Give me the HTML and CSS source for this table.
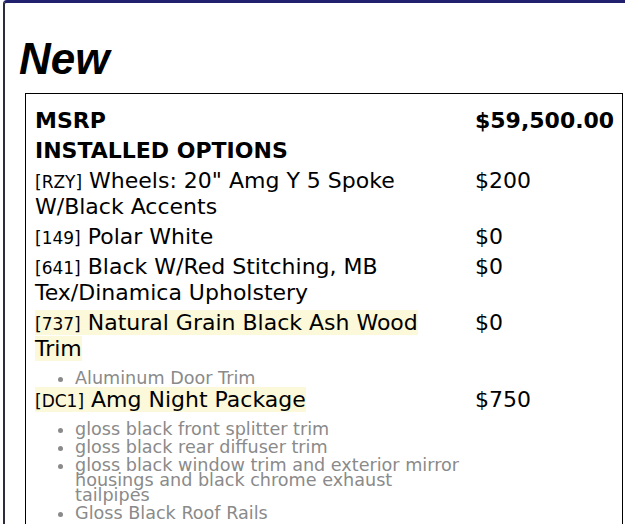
FILE: index.html
```html
<!DOCTYPE html>
<html>
<head>
<meta charset="utf-8">
<link rel="stylesheet" href="styles.css">
</head>
<body>
<div class="page">
  <h1 class="title">New</h1>
  <div class="box">
    <div class="grid">
      <div class="label strong">MSRP</div>
      <div class="price strong">$59,500.00</div>

      <div class="label strong">INSTALLED OPTIONS</div>
      <div class="price"></div>

      <div class="label"><span class="code">[RZY]</span> Wheels: 20" Amg Y 5 Spoke W/Black Accents</div>
      <div class="price">$200</div>

      <div class="label"><span class="code">[149]</span> Polar White</div>
      <div class="price">$0</div>

      <div class="label"><span class="code">[641]</span> Black W/Red Stitching, MB Tex/Dinamica Upholstery</div>
      <div class="price">$0</div>

      <div class="label">
        <span class="hl"><span class="code">[737]</span> Natural Grain Black Ash Wood Trim</span>
        <ul class="sub">
          <li>Aluminum Door Trim</li>
        </ul>
      </div>
      <div class="price">$0</div>

      <div class="label">
        <span class="hl"><span class="code">[DC1]</span> Amg Night Package</span>
        <ul class="sub">
          <li>gloss black front splitter trim</li>
          <li>gloss black rear diffuser trim</li>
          <li>gloss black window trim and exterior mirror housings and black chrome exhaust tailpipes</li>
          <li>Gloss Black Roof Rails</li>
        </ul>
      </div>
      <div class="price">$750</div>
    </div>
  </div>
</div>
</body>
</html>
```

FILE: styles.css
```css
html, body {
  margin: 0;
  padding: 0;
  background: #ffffff;
  overflow: hidden;
}

.page {
  margin-left: 3px;
  width: 700px;
  min-height: 600px;
  border-top: 3px solid #20206e;
  border-left: 2px solid #2c2c3c;
  border-top-left-radius: 4px;
  background: #ffffff;
}

.title {
  margin: 33px 0 11px 14px;
  font-family: "Liberation Sans", Arial, sans-serif;
  font-style: italic;
  font-weight: bold;
  font-size: 44px;
  line-height: 46px;
  color: #000;
}

.box {
  margin-left: 20px;
  width: 587px;
  border: 1px solid #000;
  padding: 14px 0 20px 9px;
  font-family: "DejaVu Sans", sans-serif;
  font-size: 22px;
  line-height: 26px;
  color: #000;
}

.grid {
  display: grid;
  grid-template-columns: 432px auto;
  column-gap: 8px;
  row-gap: 4px;
}

.strong {
  font-weight: bold;
}

.code {
  font-size: 17px;
  line-height: 1;
}

.hl {
  background: #fcf8da;
}

.sub {
  margin: 0 0 -3px 0;
  padding: 9px 0 0 40px;
  font-size: 17.6px;
  line-height: 15px;
  color: #8a8a8a;
}

.sub li + li {
  margin-top: 3px;
}
```
